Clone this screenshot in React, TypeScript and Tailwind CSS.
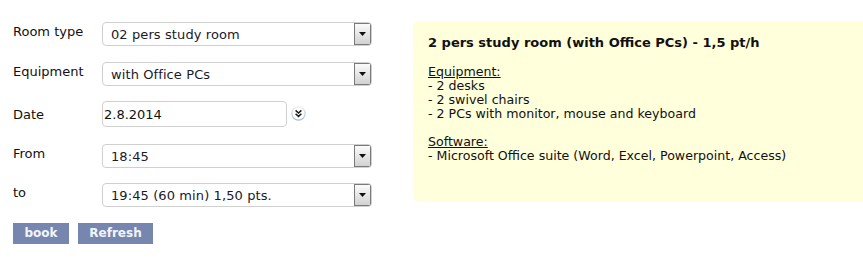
import React from "react";

function Arrow() {
  return (
    <div className="flex h-full w-[17px] items-center justify-center border border-[#7a7a7a] bg-gradient-to-b from-[#fbfbfb] to-[#d2d2d2]">
      <svg width="7" height="4" viewBox="0 0 7 4">
        <polygon points="0,0 7,0 3.5,4" fill="#111" />
      </svg>
    </div>
  );
}

function Select({ value }: { value: string }) {
  return (
    <div className="flex h-[24px] w-[270px] items-stretch overflow-hidden rounded-[4px] border border-[#d0d0d0] bg-white">
      <div className="flex flex-1 items-center pl-[8px] tracking-[0.1px] text-[#1a1a2a]">{value}</div>
      <Arrow />
    </div>
  );
}

function DateIcon() {
  return (
    <svg width="15" height="15" viewBox="0 0 15 15" className="ml-[4px] mt-[-2px]">
      <defs>
        <linearGradient id="dg" x1="0" y1="0" x2="0" y2="1">
          <stop offset="0" stopColor="#efefef" />
          <stop offset="1" stopColor="#a9bcd6" />
        </linearGradient>
      </defs>
      <circle cx="7.5" cy="7.5" r="6.6" fill="#ffffff" stroke="url(#dg)" strokeWidth="1.3" />
      <polyline points="4.6,4.4 7.5,7 10.4,4.4" fill="none" stroke="#1a1a1a" strokeWidth="1.5" />
      <polyline points="4.6,7.8 7.5,10.4 10.4,7.8" fill="none" stroke="#1a1a1a" strokeWidth="1.5" />
    </svg>
  );
}

function Row({ label, children, mt, pt }: { label: string; children: React.ReactNode; mt: string; pt: string }) {
  return (
    <div className={`flex items-start ${mt}`}>
      <div className={`w-[89px] text-[#111] ${pt}`}>{label}</div>
      {children}
    </div>
  );
}

export default function App() {
  return (
    <div className="flex h-[265px] w-[863px] overflow-hidden bg-white font-['DejaVu_Sans',Verdana,sans-serif] text-[13px] leading-[15px] text-[#111]">
      <div className="flex w-[413px] shrink-0 flex-col pl-[13px] pt-[22px]">
        <Row label="Room type" mt="mt-0" pt="pt-[2px]">
          <Select value="02 pers study room" />
        </Row>
        <Row label="Equipment" mt="mt-[16px]" pt="pt-[2px]">
          <Select value="with Office PCs" />
        </Row>
        <div className="mt-[15px] flex items-center">
          <div className="w-[89px] pt-[1px]">Date</div>
          <div className="flex h-[26px] w-[185px] items-center rounded-[4px] border border-[#d0d0d0] bg-white pl-[1px] text-[#111]">
            2.8.2014
          </div>
          <DateIcon />
        </div>
        <Row label="From" mt="mt-[17px]" pt="pt-[2px]">
          <Select value="18:45" />
        </Row>
        <Row label="to" mt="mt-[15px]" pt="pt-[2px]">
          <Select value="19:45 (60 min) 1,50 pts." />
        </Row>
        <div className="mt-[16px] flex gap-[9px] text-[12px]">
          <button className="h-[21px] w-[56px] bg-[#7686ae] text-center font-bold leading-[21px] text-[#f2f4fa]">book</button>
          <button className="h-[21px] w-[75px] bg-[#7686ae] text-center font-bold leading-[21px] text-[#f2f4fa]">Refresh</button>
        </div>
      </div>
      <div className="mt-[21px] h-[180px] w-[480px] shrink-0 rounded-[5px] bg-[#ffffdc] pl-[15px] pt-[15px] text-[12.6px] leading-[14px] text-[#111]">
        <div className="text-[13px] font-bold">2 pers study room (with Office PCs) - 1,5 pt/h</div>
        <div className="mt-[15px]">
          <div className="underline">Equipment:</div>
          <div>- 2 desks</div>
          <div>- 2 swivel chairs</div>
          <div>- 2 PCs with monitor, mouse and keyboard</div>
          <div className="h-[14px]" />
          <div className="underline">Software:</div>
          <div>- Microsoft Office suite (Word, Excel, Powerpoint, Access)</div>
        </div>
      </div>
    </div>
  );
}
